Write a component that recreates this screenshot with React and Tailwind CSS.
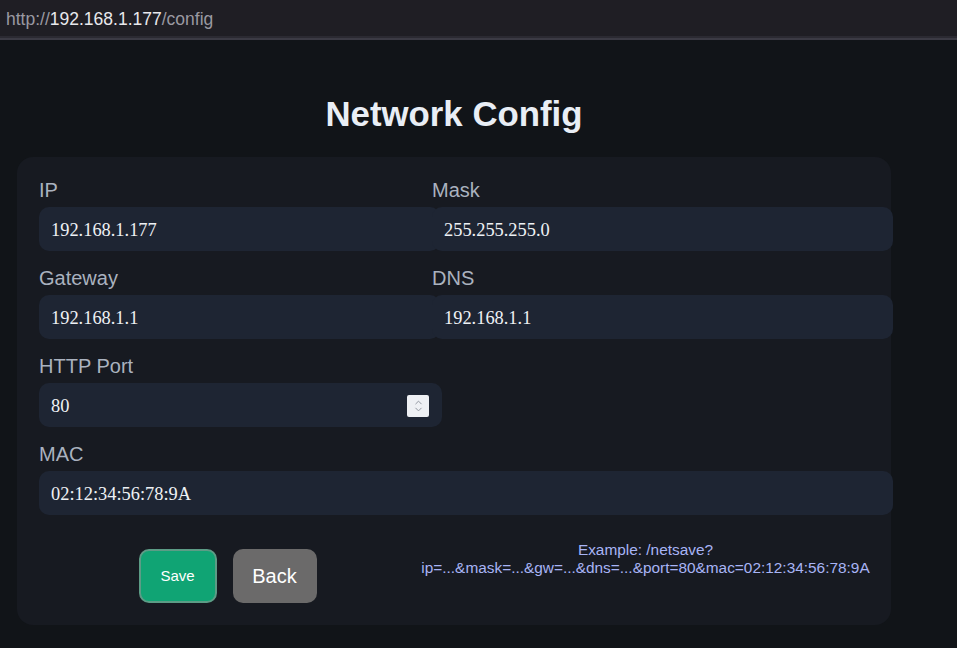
import { ChevronUp, ChevronDown } from "lucide-react";

// Network config page: fake address bar + settings card
const sans = { fontFamily: '"Liberation Sans", Arial, sans-serif' };
const serif = { fontFamily: '"Liberation Serif", "Times New Roman", serif' };

function Field({ label, value, wide, spinner, full }) {
  return (
    <div className={full ? "col-span-2" : ""}>
      <div className="mb-[6px] text-[20px] leading-[22px] text-[#aab2bf]" style={sans}>
        {label}
      </div>
      <div
        className={`relative flex h-[44px] items-center rounded-[10px] bg-[#1e2533] px-3 pt-[3px] text-[18.4px] text-[#eef1f5] ${
          full ? "w-[854px]" : wide ? "w-[461px]" : spinner ? "w-[403px]" : "w-[401px]"
        }`}
        style={serif}
      >
        {value}
        {spinner && (
          <div className="absolute right-[13px] top-[12px] flex h-[22px] w-[22px] flex-col items-center justify-center rounded-[2px] bg-[#eef0f4] text-[#8a8f99]">
            <ChevronUp size={11} strokeWidth={2} className="-mb-[2px]" />
            <ChevronDown size={11} strokeWidth={2} className="-mt-[2px]" />
          </div>
        )}
      </div>
    </div>
  );
}

export default function App() {
  return (
    <div className="min-h-[648px] w-[957px] bg-[#111418]" style={sans}>
      {/* browser address bar */}
      <div className="flex h-[36px] items-center bg-[#1f1e24] px-[6px] pt-[2px] text-[17.5px] text-[#9a99a1]">
        http://<span className="text-[#e8e8ec]">192.168.1.177</span>/config
      </div>
      <div className="h-[2px] bg-[#2b2a32]" />
      <div className="h-[2px] bg-[#3b3a44]" />

      <div className="px-[17px]">
        <h1 className="w-[874px] pt-[54px] text-center text-[34.8px] font-bold leading-[40px] text-[#e9eef5]">
          Network Config
        </h1>

        <div className="mt-[23px] w-[874px] rounded-[16px] bg-[#171a21] p-[22px]">
          <div className="grid grid-cols-[377px_437px] gap-x-4 gap-y-4">
            <Field label="IP" value="192.168.1.177" />
            <Field label="Mask" value="255.255.255.0" wide />
            <Field label="Gateway" value="192.168.1.1" />
            <Field label="DNS" value="192.168.1.1" wide />
            <Field label="HTTP Port" value="80" spinner />
            <div />
            <Field label="MAC" value="02:12:34:56:78:9A" full />

            {/* actions */}
            <div className="flex justify-center gap-4 pt-[18px]">
              <button className="h-[54px] w-[78px] rounded-[10px] border-2 border-[#5c9c86] bg-[#10a474] text-[15px] text-white">
                Save
              </button>
              <button className="h-[54px] w-[84px] rounded-[10px] bg-[#6b6a6a] text-[20px] text-white">
                Back
              </button>
            </div>
            <div className="-ml-[30px] -mr-[20px] pt-[10px] text-center text-[15.4px] leading-[18px] text-[#a8b4f5]">
              Example: /netsave?
              <br />
              ip=...&amp;mask=...&amp;gw=...&amp;dns=...&amp;port=80&amp;mac=02:12:34:56:78:9A
            </div>
          </div>
        </div>
      </div>
    </div>
  );
}
